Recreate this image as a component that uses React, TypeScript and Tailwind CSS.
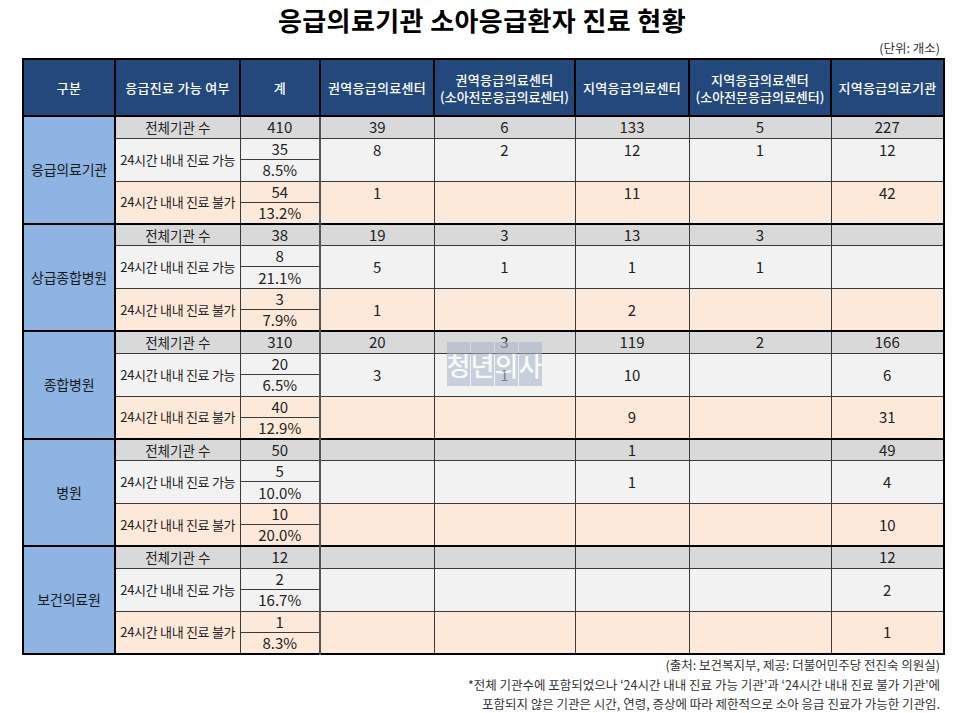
import React from "react";

type Group = {
  name: string;
  total: string[];
  yes: { count: string; pct: string; cells: string[] };
  no: { count: string; pct: string; cells: string[] };
  top?: boolean;
};

const groups: Group[] = [
  {
    name: "응급의료기관",
    total: ["410", "39", "6", "133", "5", "227"],
    yes: { count: "35", pct: "8.5%", cells: ["8", "2", "12", "1", "12"] },
    no: { count: "54", pct: "13.2%", cells: ["1", "", "11", "", "42"] },
    top: true,
  },
  {
    name: "상급종합병원",
    total: ["38", "19", "3", "13", "3", ""],
    yes: { count: "8", pct: "21.1%", cells: ["5", "1", "1", "1", ""] },
    no: { count: "3", pct: "7.9%", cells: ["1", "", "2", "", ""] },
  },
  {
    name: "종합병원",
    total: ["310", "20", "3", "119", "2", "166"],
    yes: { count: "20", pct: "6.5%", cells: ["3", "1", "10", "", "6"] },
    no: { count: "40", pct: "12.9%", cells: ["", "", "9", "", "31"] },
  },
  {
    name: "병원",
    total: ["50", "", "", "1", "", "49"],
    yes: { count: "5", pct: "10.0%", cells: ["", "", "1", "", "4"] },
    no: { count: "10", pct: "20.0%", cells: ["", "", "", "", "10"] },
  },
  {
    name: "보건의료원",
    total: ["12", "", "", "", "", "12"],
    yes: { count: "2", pct: "16.7%", cells: ["", "", "", "", "2"] },
    no: { count: "1", pct: "8.3%", cells: ["", "", "", "", "1"] },
  },
];

const headers = [
  ["구분"],
  ["응급진료 가능 여부"],
  ["계"],
  ["권역응급의료센터"],
  ["권역응급의료센터", "(소아전문응급의료센터)"],
  ["지역응급의료센터"],
  ["지역응급의료센터", "(소아전문응급의료센터)"],
  ["지역응급의료기관"],
];

const cell = "border border-[#3a3a3a] p-0 text-center";

function GroupRows({ g }: { g: Group }) {
  const dataAlign = g.top ? "align-top" : "align-middle";
  return (
    <>
      <tr className="h-[22px] bg-[#d9d9d9]">
        <td rowSpan={5} className={`${cell} border-2 border-black border-r-2 bg-[#8db4e2] text-[14px] tracking-[-0.2px] text-[#1a1a1a]`}>
          {g.name}
        </td>
        <td className={`${cell} border-t-2 border-t-black text-[13.5px]`}>전체기관 수</td>
        {g.total.map((v, i) => (
          <td
            key={i}
            className={`${cell} border-t-2 border-t-black text-[15px] leading-[20px] ${i === 0 ? "border-r-2 border-r-[#555]" : ""}`}
          >
            {v}
          </td>
        ))}
      </tr>
      <tr className="h-[21px] bg-[#f2f2f2]">
        <td rowSpan={2} className={`${cell} text-[13px] tracking-[-0.3px] whitespace-nowrap`}>24시간 내내 진료 가능</td>
        <td className={`${cell} text-[15px] leading-[20px]`}>{g.yes.count}</td>
        {g.yes.cells.map((v, i) => (
          <td
            key={i}
            rowSpan={2}
            className={`${cell} ${dataAlign} text-[15px] leading-[22px] ${i === 0 ? "border-l-2 border-l-[#555]" : ""}`}
          >
            {v}
          </td>
        ))}
      </tr>
      <tr className="h-[22px] bg-[#f2f2f2]">
        <td className={`${cell} text-[15px] leading-[20px]`}>{g.yes.pct}</td>
      </tr>
      <tr className="h-[21px] bg-[#fde9d9]">
        <td rowSpan={2} className={`${cell} text-[13px] tracking-[-0.3px] whitespace-nowrap`}>24시간 내내 진료 불가</td>
        <td className={`${cell} text-[15px] leading-[20px]`}>{g.no.count}</td>
        {g.no.cells.map((v, i) => (
          <td
            key={i}
            rowSpan={2}
            className={`${cell} ${dataAlign} text-[15px] leading-[22px] ${i === 0 ? "border-l-2 border-l-[#555]" : ""}`}
          >
            {v}
          </td>
        ))}
      </tr>
      <tr className="h-[21px] bg-[#fde9d9]">
        <td className={`${cell} text-[15px] leading-[20px]`}>{g.no.pct}</td>
      </tr>
    </>
  );
}

export default function App() {
  return (
    <div className="relative w-[960px] h-[713px] bg-white text-[#222] font-['Noto_Sans_CJK_KR',sans-serif]">
      <div className="h-[38px] flex items-center justify-center pl-[4px] text-[26px] font-bold text-black tracking-[0.4px]">
        응급의료기관 소아응급환자 진료 현황
      </div>
      <div className="h-[20px] pr-[20px] flex items-center justify-end text-[12.5px] text-[#333]">(단위: 개소)</div>

      <table className="ml-[22px] w-[921px] table-fixed border-collapse border-2 border-black">
        <colgroup>
          <col className="w-[92px]" />
          <col className="w-[125px]" />
          <col className="w-[80px]" />
          <col className="w-[114px]" />
          <col className="w-[141px]" />
          <col className="w-[114px]" />
          <col className="w-[142px]" />
          <col className="w-[113px]" />
        </colgroup>
        <thead>
          <tr className="h-[57px] bg-[#23487b]">
            {headers.map((h, i) => (
              <th
                key={i}
                className="border-2 border-black p-0 text-center text-[13px] font-medium leading-[17px] tracking-[0.3px] text-white whitespace-nowrap"
              >
                {h.map((line, j) => (
                  <div key={j} className={j === 1 ? "tracking-[0px]" : ""}>{line}</div>
                ))}
              </th>
            ))}
          </tr>
        </thead>
        <tbody>
          {groups.map((g) => (
            <GroupRows key={g.name} g={g} />
          ))}
        </tbody>
      </table>

      <div className="pr-[20px] pt-[1px] text-right text-[12.5px] leading-[18px] text-[#333]">
        (출처: 보건복지부, 제공: 더불어민주당 전진숙 의원실)
      </div>
      <div className="pr-[20px] pt-[1px] text-right text-[12.5px] leading-[19px] text-[#333]">
        <div>*전체 기관수에 포함되었으나 ‘24시간 내내 진료 가능 기관’과 ‘24시간 내내 진료 불가 기관’에</div>
        <div>포함되지 않은 기관은 시간, 연령, 증상에 따라 제한적으로 소아 응급 진료가 가능한 기관임.</div>
      </div>

      {/* watermark */}
      <div className="absolute left-[447px] top-[342px] flex gap-[1px] opacity-60">
        {["청", "년", "의", "사"].map((c) => (
          <div
            key={c}
            className="w-[23px] h-[44px] bg-[#a9b9cc] flex items-center justify-center text-[26px] font-medium text-white"
          >
            {c}
          </div>
        ))}
      </div>
    </div>
  );
}
